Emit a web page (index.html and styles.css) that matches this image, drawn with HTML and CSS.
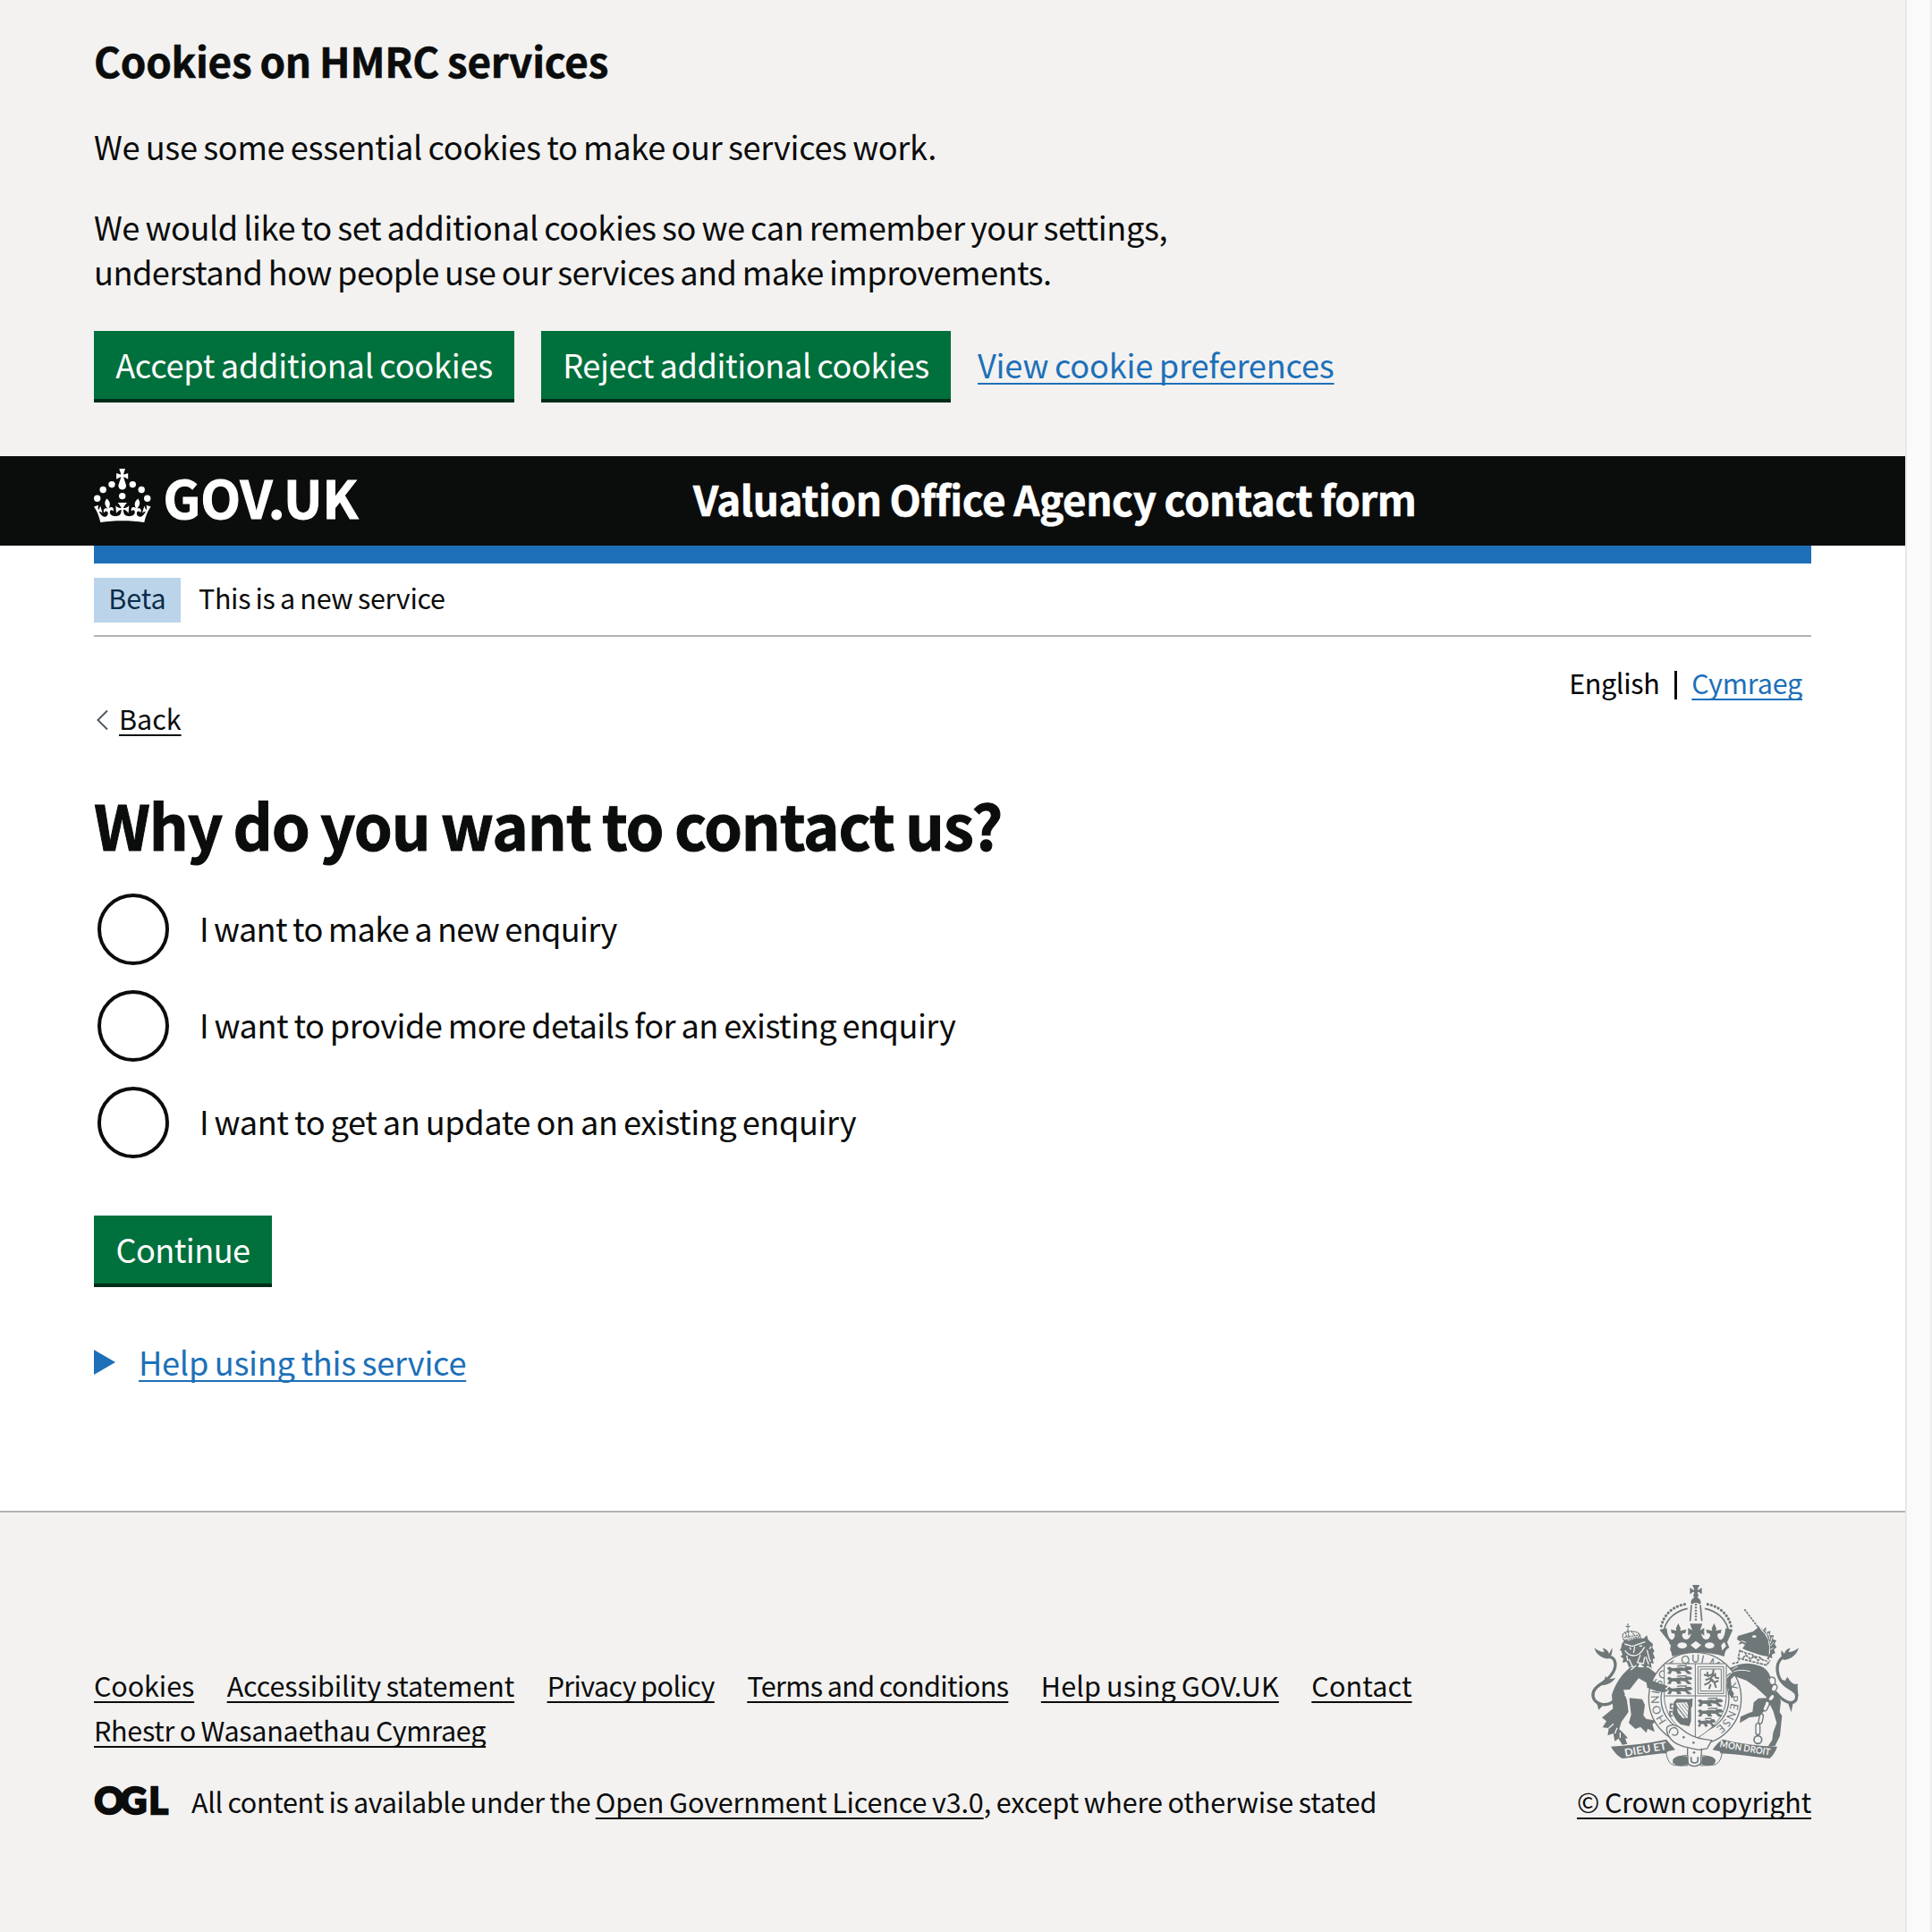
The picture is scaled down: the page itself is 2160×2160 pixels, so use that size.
FILE: index.html
```html
<!DOCTYPE html>
<html lang="en">
<head>
<meta charset="utf-8">
<title>Why do you want to contact us? - Valuation Office Agency contact form - GOV.UK</title>
<link rel="stylesheet" href="styles.css">
</head>
<body>
<div class="page">
  <section class="cookie-banner" aria-label="Cookies on HMRC services">
    <h2 class="cookie-banner__title">Cookies on HMRC services</h2>
    <p class="cookie-banner__text cookie-banner__text--intro">We use some essential cookies to make our services work.</p>
    <p class="cookie-banner__text">We would like to set additional cookies so we can remember your settings,<br><span class="tight">understand how people use our services and make improvements.</span></p>
    <div class="button-group">
      <button class="button button--accept">Accept additional cookies</button>
      <button class="button button--reject">Reject additional cookies</button>
      <a class="link link--preferences" href="#">View cookie preferences</a>
    </div>
  </section>

  <header class="header">
    <svg class="header__logo" viewBox="0 0 310 80" width="310" height="80" role="img" aria-label="GOV.UK">
      <g fill="#fff">
        <circle cx="20" cy="17.6" r="3.7"/><circle cx="10.2" cy="23.5" r="3.7"/><circle cx="3.7" cy="33.2" r="3.7"/>
        <circle cx="31.7" cy="30.6" r="3.7"/><circle cx="43.3" cy="17.6" r="3.7"/><circle cx="53.2" cy="23.5" r="3.7"/><circle cx="59.7" cy="33.2" r="3.7"/>
        <path d="M33.1,9.8c.2-.1.3-.3.5-.5l4.6,2.4v-6.8l-4.6,1.5c-.1-.2-.3-.3-.5-.5l1.9-5.9h-6.7l1.9,5.9c-.2.1-.3.3-.5.5l-4.6-1.5v6.8l4.6-2.4c.1.2.3.3.5.5l-2.6,8c-.9,2.8,1.2,5.7,4.1,5.7h0c3,0,5.1-2.9,4.1-5.7l-2.6-8ZM37,37.9s-3.4,3.8-4.1,6.1c2.2,0,4.2-.5,6.4-2.8l-.7,8.5c-2-2.8-4.4-4.1-5.7-3.8.1,3.1.5,6.7,5.8,7.2,3.7.3,6.7-1.5,7-3.8.4-2.6-2-4.3-3.7-1.6-1.4-4.5,2.4-6.1,4.9-3.2-1.9-4.5-1.8-7.7,2.4-10.9,3,4,2.6,7.3-1.2,11.1,2.4-1.3,6.2,0,4,4.6-1.2-2.8-3.7-2.2-4.2.2-.3,1.7.7,3.7,3,4.2,1.9.3,4.7-.9,7-5.9-1.3,0-2.4.7-3.9,1.7l2.4-8c.6,2.3,1.4,3.7,2.2,4.5.6-1.6.5-2.8,0-5.3l5,1.8c-2.6,3.6-5.2,8.7-7.3,17.5-7.4-1.1-15.7-1.7-24.5-1.7h0c-8.8,0-17.1.6-24.5,1.7-2.1-8.9-4.7-13.9-7.3-17.5l5-1.8c-.5,2.5-.6,3.7,0,5.3.8-.8,1.6-2.3,2.2-4.5l2.4,8c-1.5-1-2.6-1.7-3.9-1.7,2.3,5,5.2,6.2,7,5.9,2.3-.4,3.3-2.4,3-4.2-.5-2.4-3-3.1-4.2-.2-2.2-4.6,1.6-6,4-4.6-3.7-3.7-4.2-7.1-1.2-11.1,4.2,3.2,4.3,6.4,2.4,10.9,2.5-2.8,6.3-1.3,4.9,3.2-1.8-2.7-4.1-1-3.7,1.6.3,2.3,3.3,4.1,7,3.8,5.4-.5,5.7-4.2,5.8-7.2-1.3-.2-3.7,1-5.7,3.8l-.7-8.5c2.2,2.3,4.2,2.7,6.4,2.8-.7-2.3-4.1-6.1-4.1-6.1h10.6,0Z"/>
        <text class="header__wordmark" x="77.5" y="56" textLength="218" lengthAdjust="spacingAndGlyphs">GOV.UK</text>
      </g>
    </svg>
    <div class="header__service">Valuation Office Agency contact form</div>
  </header>

  <div class="container">
    <div class="phase-banner">
      <strong class="tag">Beta</strong>
      <span class="phase-banner__text">This is a new service</span>
    </div>
    <nav class="language">
      <span class="language__current">English</span>
      <a class="link language__other" href="#">Cymraeg</a>
    </nav>
    <a class="back" href="#">
      <svg class="back__chevron" width="15" height="24" viewBox="0 0 15 24"><path d="M14 1.5 3.5 12 14 22.5" fill="none" stroke="#505a5f" stroke-width="2"/></svg>
      <span class="back__label">Back</span>
    </a>
    <main>
      <h1 class="heading">Why do you want to contact us?</h1>
      <div class="radios">
        <label class="radio"><span class="radio__dot"></span><span class="radio__label radio__label--new">I want to make a new enquiry</span></label>
        <label class="radio"><span class="radio__dot"></span><span class="radio__label">I want to provide more details for an existing enquiry</span></label>
        <label class="radio"><span class="radio__dot"></span><span class="radio__label radio__label--update">I want to get an update on an existing enquiry</span></label>
      </div>
      <button class="button button--continue">Continue</button>
      <div class="help">
        <svg class="help__arrow" width="24" height="28" viewBox="0 0 24 28"><path d="M0 0 24 14 0 28z" fill="#1d70b8"/></svg>
        <a class="link help__link" href="#">Help using this service</a>
      </div>
    </main>
  </div>

  <footer class="footer">
    <div class="footer__meta">
      <nav class="footer__links">
        <a href="#">Cookies</a>
        <a href="#">Accessibility statement</a>
        <a class="snug" href="#">Privacy policy</a>
        <a class="snug" href="#">Terms and conditions</a>
        <a class="loose" href="#">Help using GOV.UK</a>
        <a class="loose" href="#">Contact</a>
        <a class="footer__welsh" href="#">Rhestr o Wasanaethau Cymraeg</a>
      </nav>
      <div class="licence">
        <svg class="licence__logo" width="84" height="50" viewBox="0 0 84 50" role="img" aria-label="OGL">
          <text class="licence__mark" y="39.5"><tspan x=".5">O</tspan><tspan x="29.5">G</tspan><tspan x="61.5">L</tspan></text>
        </svg>
        <span class="licence__text">All content is available under the <a href="#">Open Government Licence v3.0</a><span class="licence__tail">, except where otherwise stated</span></span>
      </div>
    </div>
    <div class="copyright">
      <svg class="copyright__crest" width="234" height="206" viewBox="114 90 702 618" role="img" aria-label="Royal coat of arms">
        <defs>
          <path id="garter" d="M370 549A121 121 0 1 1 525 579"/>
          <g id="lion-passant">
            <path d="M0 6 8 1 17 6 31 5 46 3 58 5 64 0 80 1 86 8 79 12 68 12 77 19 84 25 70 26 60 16 44 15 49 24 36 26 30 17 17 16 12 26 1 24 7 15z"/>
            <path d="M34 0C48-6 56 2 66-4" fill="none" stroke="#6f7779" stroke-width="4"/>
          </g>
        </defs>
        <g fill="#6f7779">
          <!-- imperial crown -->
          <path d="M456 93h25l-7 13c-1 4 0 5 4 3l10-7v22l-10-7c-4-2-5-1-4 3l3 9-4 6c9 4 13 12 11 20l-4 3c-3-7-21-7-24 0l-4-3c-2-8 2-16 11-20l-4-6 3-9c1-4 0-5-4-3l-10 7v-22l10 7c4 2 5 1 4-3z"/>
          <path d="M453 160l-4 54M483 160l5 54" fill="none" stroke="#6f7779" stroke-width="5"/>
          <path d="M468 156v58" fill="none" stroke="#6f7779" stroke-width="7" stroke-dasharray="6 4"/>
          <path d="M352 231C362 188 396 162 436 157M586 231C576 188 542 162 502 157" fill="none" stroke="#6f7779" stroke-width="9" stroke-linecap="round" stroke-dasharray="1 11.5"/>
          <path d="M362 240C372 204 402 180 440 172M576 240C566 204 536 180 498 172" fill="none" stroke="#6f7779" stroke-width="5"/>
          <path d="M346 243l24-5 3 18c5 22 16 26 22 14 6-10 1-18-8-14l-3-14 13 3 6 2-2-8 8-18 8 18-2 8 7-2 14-3-4 14c-8-4-14 4-7 14 9 12 24 5 27-14l-10 7v-26l14 8-8-22h42l-8 22 14-8v26l-10-7c3 19 18 26 27 14 7-10 1-18-7-14l-4-14 14 3 7 2-2-8 8-18 8 18-2 8 6-2 13-3-3 14c-9-4-14 4-8 14 6 12 17 8 22-14l3-18 24 5-19 42 7 18c-12 7-14 14-17 30-52-18-122-18-174 0-3-16-5-23-17-30l7-18z"/>
          <g fill="#f3f2f1"><path d="M374 284l10 11-3 18-14-15zM563 284l-10 11 3 18 14-15z"/><ellipse cx="422" cy="296" rx="16" ry="10"/><ellipse cx="514" cy="296" rx="16" ry="10"/><path d="M468 281l18 14-18 14-18-14z"/></g>
          <!-- lion supporter -->
          <path d="M196 480C168 505 128 494 123 466 120 436 150 428 168 412 192 390 203 366 195 346 189 331 172 332 160 330" fill="none" stroke="#6f7779" stroke-width="10"/>
          <path d="M127 303c10 10 24 15 34 15l-6-14c15 5 20 13 22 20l10-20c3 18-5 30-9 36-16 2-44-8-51-37zM120 466c8-24 14-40 32-46 10-8 12-14 12-22 6 5 7 8 7 12l28-5c-14 18-30 24-44 24-18 6-22 18-35 37zM134 484l8 28 16-16z"/>
          <path d="M248 368C208 404 196 432 186 462L190 508 153 538l15 12-13 21 21 2-4 25 19-7 5 26 13-9 12 21 17-3-7-18 9-1-16-18-13-12 7-24 24-34-5-38-12-36 21-1 30-38 37 21 45 12 29 7 4-11 7-12-48-21-41-32z"/>
          <path d="M244 472l44 4 9 20-5 34 9 12 35 6-14 12 8 26-24-11-4 14-20-20-17 7-22-20 8-28z"/>
          <path d="M220 290l10-13 12 3 27-9 24 1 11-10 4 15 16 14-2 12 7 11-5 8 7 17-8 3 4 15-10-2 3 18-13-9-10 8-17-18-10 22-14-14-12 8-8-20-14 4 3-14-10-7 7-6-4-12-5-4 4-6z"/>
          <g fill="none" stroke="#f3f2f1" stroke-width="4"><path d="M229 291l26 8 43-15M230 313c16 20 22 15 28 17 18 0 26-9 38-29M263 300l-4 21M246 302l4 8M278 299l10-2M282 328l-10 25 20 4 4-22M244 342l10 22M304 311l8 30M300 334l10 26M318 300l-6 8M316 350l-6-14M236 330l4 18M268 362l-18 16M229 462l14 8-2 22M176 573l16-14M196 592l8-20M214 606l0-18"/></g>
          <path d="M225 277l-3-16c4-8 12-12 18-12 9-3 34 0 40 11l3 11M228 269l52-9M226 279l56-14M240 223v26M233 232h14M241 249l2 20M252 248l12 16M232 253l4 14" fill="none" stroke="#6f7779" stroke-width="4" stroke-dasharray="6 2"/>
          <!-- unicorn supporter -->
          <path d="M631 175L680 239" fill="none" stroke="#6f7779" stroke-width="5" stroke-dasharray="8 3"/>
          <path d="M660 249l14-11 4-8 10 16 10 10 12 20 4 24-1 34-24-5-51-15-14-8 9-12-9-5-14 4 8-10-12-7 3-12z"/>
          <path d="M686 232l6 14 11-12 1 18 14-5-2 15 14 0-4 13 12 4-6 12 7 11-9 7 4 13-11 4 1 14-9-5-3 12-7-4 12-22-1-34-10-26-12-14z"/>
          <path d="M700 244l10 18M712 254l4 22M724 266l-6 22M730 284l-12 14M728 304l-10 6" fill="none" stroke="#f3f2f1" stroke-width="3"/>
          <path d="M612 310l11-3 22 8 24 8 22 12 24 9-5 20-99-28z" fill="#f3f2f1"/>
          <path d="M616 310l-6 28 95 24 12-16M618 314l12 5 9 4 16 2 9 8 16 2 9 8 18 6M626 338l9-10 17 14 10-10 15 14 11-8M590 357l18-4 6-12" fill="none" stroke="#6f7779" stroke-width="5" stroke-dasharray="10 3"/>
          <ellipse cx="664" cy="266" rx="7" ry="4" fill="#f3f2f1"/>
          <path d="M620 280l16 6" fill="none" stroke="#f3f2f1" stroke-width="3"/>
          <path d="M597 366c30-14 55-12 88-1 20 8 31 24 33 39l-8 6 19 24-3 38-16 13-6-17-36-33-31-22-48-17-15 6 1 46-17 16-13-45 11-39z"/>
          <path d="M713 430l31 30 9 24-4 36 8 12-7 67-16 33-25 4 15-23 3-24 12-33-12-41-10-20-13 15-25 24-31 3-33 19 3-21 23-11 17-6 4-31 16-14 45-2 4-10z"/>
          <path d="M608 367c-11 4-18 10-22 17M584 391c18-15 43-14 66-8" fill="none" stroke="#f3f2f1" stroke-width="3"/>
          <path d="M735 452C758 482 790 500 804 478 814 446 780 444 762 424 738 400 734 360 754 340 762 332 772 332 782 330" fill="none" stroke="#6f7779" stroke-width="10"/>
          <path d="M813 303c-10 10-24 15-34 15l6-14c-15 5-18 13-20 20l-10-12c-3 18 3 26 7 32 16 2 44-12 51-41zM812 466c-2-18-4-32-2-42-10 6-24-2-34-22-6 5-7 8-7 12l-24-5c8 16 22 24 32 26zM778 492l10 28 6-30z"/>
          <path d="M714 412c0-16 22-11 20 3v6c-2 13-18 9-20-4zM726 428c10-6 18 4 13 14-6 14-20 8-18-2zM720 462c10-6 16 4 8 14-10 12-20 2-16-4zM700 492c-1-14 18-11 14 2l-8 18c-6 8-15 1-12-7zM682 532c2-10 14-8 12 4l-4 18c-4 8-14 4-12-4zM669 566c0-12 14-12 14 0v22c0 10-14 10-14 0z" fill="#f3f2f1" stroke="#6f7779" stroke-width="4"/>
          <circle cx="676" cy="612" r="13" fill="#f3f2f1" stroke="#6f7779" stroke-width="5"/>
          <!-- garter -->
          <circle cx="465" cy="474" r="155" fill="#f3f2f1" stroke="#6f7779" stroke-width="4"/>
          <circle cx="465" cy="474" r="114" fill="none" stroke="#6f7779" stroke-width="4"/>
          <text class="crest__garter"><textPath href="#garter" textLength="575">HONI SOIT QUI MAL Y PENSE</textPath></text>
          <!-- shield -->
          <path d="M362 357h208v106c0 74-47 112-104 148-58-36-104-76-104-148z" fill="#f3f2f1" stroke="#6f7779" stroke-width="3"/>
          <path d="M466 357v250M362 465h208" fill="none" stroke="#6f7779" stroke-width="3"/>
          <use href="#lion-passant" x="371" y="366"/><use href="#lion-passant" x="371" y="400"/><use href="#lion-passant" x="371" y="434"/>
          <use href="#lion-passant" x="474" y="475"/><use href="#lion-passant" x="474" y="509"/><use href="#lion-passant" transform="translate(474 543) scale(.7 1)"/>
          <path d="M475 367h86v90h-86zM483 375h70v74h-70z" fill="none" stroke="#6f7779" stroke-width="3"/>
          <path d="M496 392c8 10 14 2 10-8M506 400l18-8 4-16M500 412l16-6 14-12M496 428l14-6 12-12 8 10 14-6M518 426l-6 16M530 420l6 18M514 404l12 14M532 388l2 16 12 2" fill="none" stroke="#6f7779" stroke-width="6"/>
          <path d="M394 486l10-11 42 1 11-3-1 26-4 7v43l-6 18-29-6-13-12-14-23z"/>
          <path d="M402 488l36-1 5 13-3 40-15 0-17-16z" fill="#f3f2f1"/>
          <path d="M404 502l30 40M409 491l31 42M420 491l21 27M404 517l19 24M400 494l38 48M428 488l14 18" fill="none" stroke="#6f7779" stroke-width="2.5"/>
          <path d="M392 493h-9v14h9M390 518h-9v14h9" fill="none" stroke="#6f7779" stroke-width="5"/>
          <!-- near paws -->
          <path d="M300 405l43 17 32 11-11 8 12 6-15 6-22-3-34-12zM573 405l17-18 14 4-19 19 4 37 7 10-6 17-14-19 3-10-8-14z"/>
          <!-- buckle and strap -->
          <path d="M371 570c14-12 36-7 48 5 26 22 49 31 75 35l27 4-15 28-28 4c-42-7-84-15-100-45-6-8-9-18-7-31z" fill="#f3f2f1" stroke="#6f7779" stroke-width="4"/>
          <path d="M379 590c0-22 27-25 29-5 0 11-13 17-20 8M440 640v43c0 24 45 24 46 0l1-42" fill="none" stroke="#6f7779" stroke-width="4"/>
          <circle cx="427" cy="604" r="4"/><circle cx="460" cy="622" r="4"/><circle cx="462" cy="655" r="4"/>
          <path d="M452 670v10c0 13 23 13 23 0v-10" fill="none" stroke="#6f7779" stroke-width="5"/>
          <!-- motto scroll -->
          <path d="M183 635c65-4 125-11 186-24l30 35-25 5-5 7c-53 2-99 12-147 17-18-9-28-22-39-40zM741 635c-65-2-125-10-183-24-14 8-24 20-34 35l24 5 3 7c59 3 115 12 164 17 12-9 20-24 26-40z"/>
          <path d="M368 655c5 26 12 40 29 43l44 1v-34c-26-2-51 11-49 27M556 656c-4 25-12 37-29 41l-43 2 1-33c22-3 48 9 45 25" fill="#f3f2f1" stroke="#6f7779" stroke-width="3"/>
          <path d="M390 681c7-15 28-18 50-12l3 24c-16 10-38 10-48 0zM535 681c-9-15-28-17-47-12l-2 24c14 9 34 8 44 0z"/>
          <text class="crest__motto" x="231" y="669" textLength="142" lengthAdjust="spacingAndGlyphs" transform="rotate(-10 231 669)">DIEU ET</text>
          <text class="crest__motto crest__motto--right" x="547" y="637" textLength="171" lengthAdjust="spacingAndGlyphs" transform="rotate(9.5 547 637)">MON DROIT</text>
        </g>
      </svg>
      <a class="copyright__link" href="#">© Crown copyright</a>
    </div>
  </footer>
</div>
<div class="scroll-gutter"></div>
</body>
</html>
```
FILE: styles.css
```css
* { box-sizing: border-box; }

body {
  display: flex;
  min-height: 2160px;
  margin: 0;
  background: #fff;
  color: #0b0c0c;
  font-family: "Noto Sans CJK JP", "Noto Sans", sans-serif;
  font-size: 30.5px;
  font-weight: 400;
  line-height: 50px;
  word-spacing: -1px;
}

h1, h2, p { margin: 0; }

a {
  color: inherit;
  text-decoration: underline;
  text-decoration-thickness: 2px;
  text-underline-offset: 5px;
  text-decoration-skip-ink: none;
}

.page {
  display: flex;
  flex-direction: column;
  width: 2130px;
}

.scroll-gutter {
  flex: 1;
  background: #fafafa;
  border-left: 2px solid #e8e8e8;
  border-right: 2px solid #ededed;
}

.link { color: #1d70b8; }

/* Cookie banner */
.cookie-banner {
  height: 510px;
  padding: 37px 105px 0;
  background: #f3f2f1;
  font-size: 36.2px;
  letter-spacing: -.43px;
  word-spacing: -1.2px;
}

.cookie-banner__title {
  margin-bottom: 41px;
  font-size: 45.75px;
  font-weight: 700;
  line-height: 60px;
  letter-spacing: -.25px;
  word-spacing: -1px;
  -webkit-text-stroke: .6px currentColor;
}

.cookie-banner__text { margin-bottom: 42px; }
.cookie-banner__text--intro { margin-bottom: 40px; letter-spacing: -.34px; }
.tight { letter-spacing: -.58px; }

.button-group {
  display: flex;
  gap: 30px;
}

.button {
  display: block;
  height: 80px;
  padding: 1px 0 3px;
  border: 0;
  border-bottom: 4px solid #002d18;
  background: #00703c;
  color: #fff;
  font-family: inherit;
  font-size: 36.2px;
  line-height: 72px;
  text-align: center;
  white-space: nowrap;
  word-spacing: -1.2px;
}

.button--accept { width: 470px; letter-spacing: -.26px; }
.button--reject { width: 458px; letter-spacing: -.41px; }
.button--continue { width: 199px; margin-top: 64px; letter-spacing: -.6px; }

.link--preferences {
  padding-top: 1px;
  line-height: 72px;
  letter-spacing: -.2px;
}

/* Header */
.header {
  display: grid;
  grid-template-columns: 670px 1fr;
  height: 100px;
  padding: 14px 105px 0;
  background: #0b0c0c;
  color: #fff;
}

.header__wordmark {
  font-size: 57.5px;
  font-weight: 700;
  word-spacing: 0;
  stroke: #fff;
  stroke-width: 1px;
}

.header__service {
  padding-top: 3px;
  font-size: 45.75px;
  font-weight: 700;
  line-height: 60px;
  letter-spacing: -.45px;
  word-spacing: -1px;
  -webkit-text-stroke: .6px currentColor;
}

/* Main column */
.container {
  height: 1079px;
  margin: 0 105px;
  border-top: 20px solid #1d70b8;
}

.phase-banner {
  display: flex;
  gap: 20px;
  height: 82px;
  padding-top: 16px;
  border-bottom: 2px solid #b1b4b6;
  line-height: 45px;
}

.phase-banner__text { letter-spacing: -.34px; }

.tag {
  width: 97px;
  height: 50px;
  background: #bbd4ea;
  color: #0c2d4a;
  font-weight: 400;
  text-align: center;
}

.language {
  display: flex;
  justify-content: flex-end;
  margin-top: 31px;
  padding-right: 10px;
  line-height: 40px;
}

.language__current { margin-right: 17px; color: #000; letter-spacing: -.35px; }

.language__other {
  display: flex;
  gap: 16px;
  letter-spacing: -.2px;
}

.language__other::before {
  content: "";
  width: 3px;
  height: 32px;
  margin-top: 7px;
  background: #0b0c0c;
}

.back {
  display: flex;
  width: 110px;
  line-height: 40px;
  text-decoration: none;
}

.back__chevron { margin: 10px 12px 0 1px; }
.back__label {
  text-decoration: underline;
  text-decoration-thickness: 2px;
  text-decoration-skip-ink: none;
}

.heading {
  margin-top: 58px;
  font-size: 68.8px;
  font-weight: 700;
  line-height: 80px;
  letter-spacing: -1.15px;
  word-spacing: -2px;
  -webkit-text-stroke: 1px currentColor;
}

.radios {
  display: flex;
  flex-direction: column;
  gap: 28px;
  margin-top: 38px;
  padding-left: 4px;
}

.radio {
  display: flex;
  gap: 34px;
}

.radio__dot {
  width: 80px;
  height: 80px;
  border: 4px solid #0b0c0c;
  border-radius: 50%;
}

.radio__label {
  font-size: 36.2px;
  line-height: 76px;
  letter-spacing: -.52px;
  word-spacing: -1.2px;
}

.radio__label--new { letter-spacing: -.73px; }
.radio__label--update { letter-spacing: -.45px; }

.help {
  display: flex;
  gap: 26px;
  margin-top: 58px;
  font-size: 36.2px;
  letter-spacing: -.26px;
  word-spacing: -1.2px;
}

.help__arrow { margin-top: 12px; }

/* Footer */
.footer {
  display: flex;
  flex: 1;
  justify-content: space-between;
  padding: 80px 105px 122px;
  border-top: 2px solid #b1b4b6;
  background: #f3f2f1;
  align-items: flex-end;
}

.footer__meta {
  display: flex;
  flex-direction: column;
  gap: 30px;
  width: 1520px;
}

.footer__links {
  display: flex;
  flex-wrap: wrap;
  column-gap: 36.5px;
  letter-spacing: -.1px;
}

.footer__links .snug { letter-spacing: -.6px; }
.footer__links .loose { letter-spacing: .15px; }
.footer__links .footer__welsh { letter-spacing: -.27px; }

.licence {
  display: flex;
  gap: 25px;
}

.licence__logo { margin-top: -1px; }

.licence__mark {
  fill: #0b0c0c;
  stroke: #0b0c0c;
  stroke-width: 2.4px;
  font-family: Lato, sans-serif;
  font-size: 41px;
  font-weight: 900;
}

.licence__text { white-space: nowrap; letter-spacing: -.33px; }
.licence__text a { letter-spacing: -.13px; }
.licence__tail { letter-spacing: -.08px; }

.copyright {
  display: flex;
  flex-direction: column;
  align-items: flex-end;
}

.copyright__crest { margin: 0 13px 12px 0; }
.copyright__link { letter-spacing: -.17px; white-space: nowrap; }

.crest__garter {
  font-family: Lato, sans-serif;
  font-size: 37px;
  letter-spacing: 0;
  word-spacing: 0;
}

.crest__motto {
  fill: #f3f2f1;
  font-family: Lato, sans-serif;
  font-size: 36px;
  font-weight: 700;
  word-spacing: 0;
}

.crest__motto--right { font-size: 32px; }
```
